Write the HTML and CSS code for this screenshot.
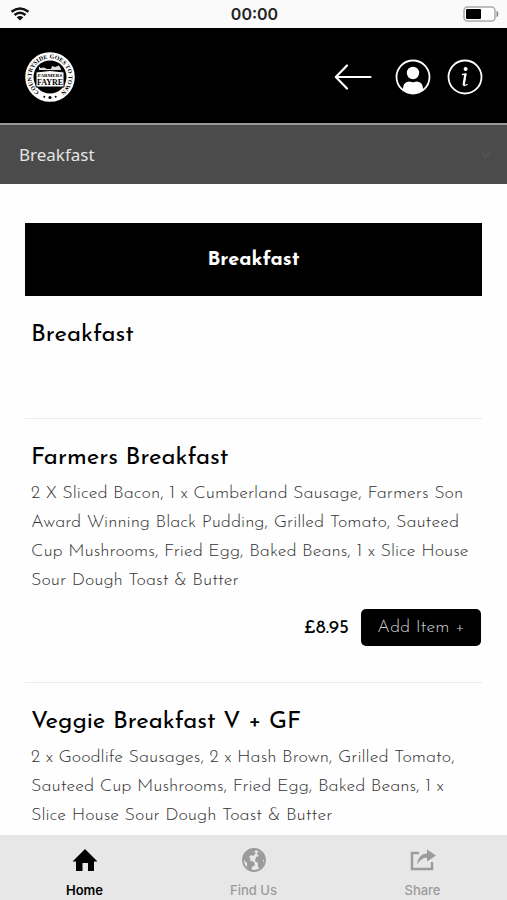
FILE: index.html
```html
<!DOCTYPE html>
<html lang="en">
<head>
<meta charset="utf-8">
<meta name="viewport" content="width=device-width, initial-scale=1">
<title>Breakfast menu</title>
<link rel="stylesheet" href="styles.css">
</head>
<body>
<div class="status">
  <svg class="wifi" viewBox="0 0 20 14" aria-hidden="true">
    <path d="M1.500 4.800Q10-2 18.500 4.800M4.500 8Q10 3.400 15.500 8" fill="none" stroke="#111" stroke-width="2.400"/>
    <path d="M6.700 10.300Q10 7.500 13.300 10.300L10 13.600Z" fill="#111"/>
  </svg>
  <time class="clock">00:00</time>
  <svg class="battery" viewBox="0 0 36 16" aria-hidden="true">
    <rect x="1" y="1" width="31" height="14" rx="3.500" fill="#fff" stroke="#aaa" stroke-width="1.500"/>
    <rect x="3" y="3" width="15" height="10" rx="1" fill="#000"/>
    <path d="M34 5.500Q36 8 34 10.500Z" fill="#888" stroke="#888"/>
  </svg>
</div>

<header class="header">
  <svg class="logo" viewBox="0 0 50 50" role="img" aria-label="Farmers Fayre">
    <defs><path id="ring" d="M14.900 40.500A18.500 18.500 0 1 1 35.100 40.500"/></defs>
    <circle cx="25" cy="25" r="24.800" fill="#fff"/>
    <circle cx="25" cy="25" r="16.500" fill="#000"/>
    <text class="logo-ring"><textPath href="#ring" startOffset="50%" text-anchor="middle">COUNTRYSIDE GOES TO TOWN</textPath></text>
    <path d="M14 18V14.500L15.500 16L19 15.500L22 17H26L27 14L30 15L34 13.500L36 17V18Z" fill="#ddd"/>
    <path d="M11 20Q25 17 39 20V35H11Z" fill="#fff" stroke="#000" stroke-width="1"/>
    <text class="logo-small" x="25" y="25" text-anchor="middle">FARMERS</text>
    <text class="logo-name" x="25" y="32.500" text-anchor="middle">FAYRE</text>
    <circle cx="25" cy="45.500" r="1.600"/><circle cx="19.300" cy="44.700" r="1"/><circle cx="30.700" cy="44.700" r="1"/>
  </svg>
  <nav class="actions" aria-label="Account">
    <button class="action back" type="button" aria-label="Back">
      <svg viewBox="0 0 38 36"><path d="M36.500 18H2M13 6.500L1.800 18L13 29.500" fill="none" stroke="#fff" stroke-width="2.200" stroke-linecap="round" stroke-linejoin="round"/></svg>
    </button>
    <button class="action" type="button" aria-label="Profile">
      <svg viewBox="0 0 36 36"><circle cx="18" cy="18" r="16.500" fill="none" stroke="#fff" stroke-width="1.800"/><circle cx="18" cy="14" r="6.200" fill="#fff"/><path d="M8 30.500V29Q8.500 22.500 14.500 22.500Q18 24 21.500 22.500Q27.500 22.500 28 29V30.500Q18 38 8 30.500Z" fill="#fff"/></svg>
    </button>
    <button class="action" type="button" aria-label="Information">
      <svg viewBox="0 0 36 36"><circle cx="18" cy="18" r="16.500" fill="none" stroke="#fff" stroke-width="1.800"/><circle cx="18.600" cy="10" r="2" fill="#fff"/><path d="M15.500 15.500L18.800 15L16.800 25.500Q16.700 27.500 20 25.500" fill="none" stroke="#fff" stroke-width="1.400" stroke-linecap="round"/><path d="M18.300 15.500L16.700 25.500" fill="none" stroke="#fff" stroke-width="2.200" stroke-linecap="round"/></svg>
    </button>
  </nav>
</header>

<div class="picker">
  <select class="category" aria-label="Menu category"><option>Breakfast</option></select>
  <svg class="chevron" viewBox="0 0 12 8" aria-hidden="true"><path d="M2 2L6 6L10 2" fill="none" stroke="#555" stroke-width="2"/></svg>
</div>

<main class="menu">
  <h1 class="banner">Breakfast</h1>
  <section class="intro"><h2 class="title">Breakfast</h2></section>
  <article class="item">
    <h2 class="title">Farmers Breakfast</h2>
    <p class="description">2 X Sliced Bacon, 1 x Cumberland Sausage, Farmers Son<br>Award Winning Black Pudding, Grilled Tomato, Sauteed<br>Cup Mushrooms, Fried Egg, Baked Beans, 1 x Slice House<br>Sour Dough Toast &amp; Butter</p>
    <div class="purchase"><span class="price">£8.95</span><button class="add" type="button">Add Item +</button></div>
  </article>
  <article class="item">
    <h2 class="title">Veggie Breakfast V + GF</h2>
    <p class="description">2 x Goodlife Sausages, 2 x Hash Brown, Grilled Tomato,<br>Sauteed Cup Mushrooms, Fried Egg, Baked Beans, 1 x<br>Slice House Sour Dough Toast &amp; Butter</p>
  </article>
</main>

<nav class="tabs" aria-label="Main">
  <a class="tab current" href="#home" aria-current="page">
    <svg viewBox="0 0 26 26"><path d="M13 2L25.500 14.500H22V24H16V16H10.500V24H4V14.500H0.500Z" fill="currentColor"/></svg>
    Home
  </a>
  <a class="tab" href="#find">
    <svg viewBox="0 0 26 26"><circle cx="13" cy="13" r="11" fill="none" stroke="currentColor" stroke-width="1.800"/><path d="M3 8Q6 3 12 2L15 3L13 5L15 6L12 9L10 8L8 10L10 12L8 13L13 15L14 18L11 20L10 24Q7 23 6 20V16L3 13Z" fill="currentColor"/><path d="M17 4L22 7L24 12L22 13L23 17L19 22L17 20V16L14 14L15 10L18 9L16 7Z" fill="currentColor"/></svg>
    Find Us
  </a>
  <a class="tab" href="#share">
    <svg viewBox="0 0 26 26"><path d="M9 6H2V22H22V15" fill="none" stroke="currentColor" stroke-width="2.400"/><path d="M7 18Q8 6.500 17 6.500V2.500L26 8.500L17 14.500V10.500Q11 10.500 7 18Z" fill="currentColor"/></svg>
    Share
  </a>
</nav>
</body>
</html>
```
FILE: styles.css
```css
* { box-sizing: border-box; }

body {
  display: flex;
  flex-direction: column;
  height: 100vh;
  margin: 0;
  background: #fefefe;
  color: #000;
  font-family: "Josefin Sans", Lato, sans-serif;
}

svg { display: block; }

.status {
  display: grid;
  grid-template-columns: 1fr auto 1fr;
  align-items: center;
  flex: none;
  height: 28px;
  padding: 0 8px 0 10px;
  background: #fafafa;
}

.wifi { width: 20px; height: 14px; }

.clock {
  font: 600 16px/28px Inter, sans-serif;
  color: #222;
}

.battery { width: 36px; height: 16px; justify-self: end; }

.header {
  display: flex;
  align-items: center;
  justify-content: space-between;
  flex: none;
  height: 97px;
  padding: 2px 24px 0 25px;
  background: #000;
  border-bottom: 2px solid #999;
}

.logo { width: 50px; height: 50px; }
.logo-ring { font: 700 6px "Liberation Serif", serif; }
.logo-small { font: 700 5px "Liberation Serif", serif; }
.logo-name { font: 700 8px "Liberation Serif", serif; }

.actions { display: flex; gap: 16px; }

.action {
  width: 36px;
  padding: 0;
  border: 0;
  background: none;
}

.back { width: 38px; margin-right: 7px; }

.action svg { width: 100%; height: 36px; }

.picker {
  display: flex;
  align-items: center;
  flex: none;
  height: 59px;
  padding-right: 15px;
  background: #4b4b4b;
}

.category {
  flex: 1;
  height: 100%;
  padding: 0 19px;
  border: 0;
  appearance: none;
  background: none;
  color: #e4e4e4;
  font: 17px "Noto Sans", sans-serif;
}

.chevron { width: 12px; height: 8px; }

.menu {
  flex: 1;
  min-height: 0;
  overflow: hidden;
  padding: 39px 25px 0;
}

.banner {
  margin: 0;
  padding-top: 2px;
  background: #000;
  color: #fff;
  font-size: 20px;
  font-weight: 700;
  line-height: 71px;
  text-align: center;
}

.intro { min-height: 122px; padding: 24px 6px; }

.item {
  padding: 24px 0 36px 6px;
  border-top: 1px solid #ececec;
}

.title {
  margin: 0;
  font-size: 24px;
  font-weight: 400;
  line-height: 30px;
}

.description {
  margin: 7px 0 13px;
  color: #333;
  font-size: 18px;
  font-weight: 330;
  line-height: 29px;
  white-space: nowrap;
}

.purchase {
  display: flex;
  align-items: center;
  justify-content: flex-end;
  gap: 12px;
  padding-right: 1px;
}

.price { padding-top: 2px; font-size: 19px; }

.add {
  width: 120px;
  height: 37px;
  padding: 0;
  border: 0;
  border-radius: 5px;
  background: #000;
  color: #ccc;
  font: 300 18px "Josefin Sans", Lato, sans-serif;
}

.tabs {
  display: grid;
  grid-template-columns: repeat(3, 1fr);
  flex: none;
  height: 65px;
  background: #e7e7e7;
}

.tab {
  display: flex;
  flex-direction: column;
  align-items: center;
  gap: 9px;
  padding-top: 12px;
  color: #9b9b9b;
  font: 500 13px/16px Inter, sans-serif;
  text-decoration: none;
}

.tab svg { width: 26px; height: 26px; }

.current { color: #000; font-weight: 600; }
```
